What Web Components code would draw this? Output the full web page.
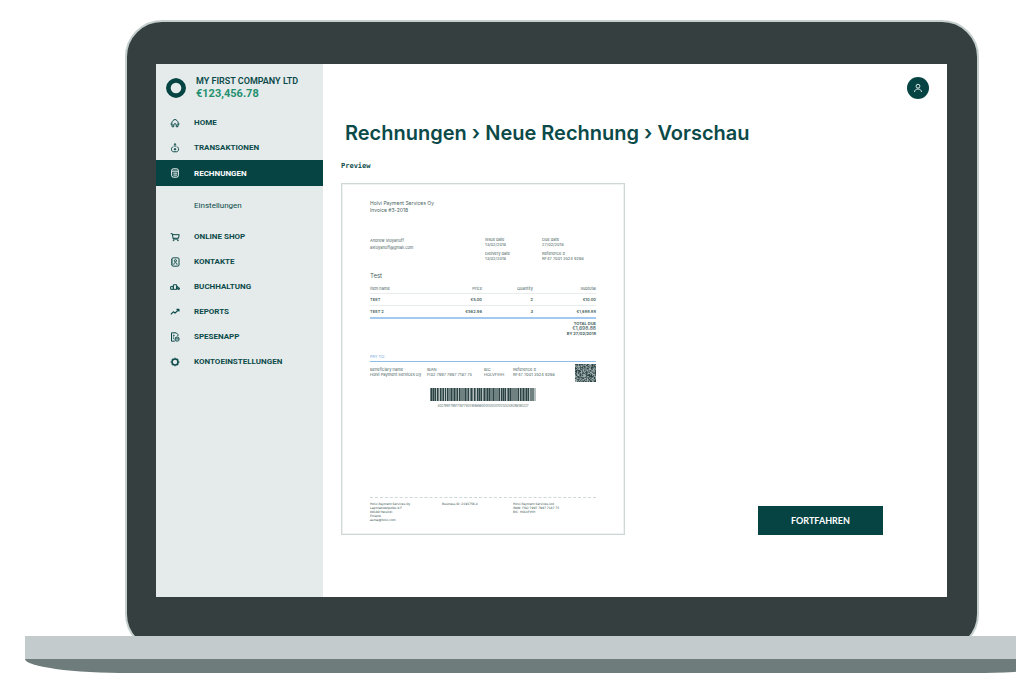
<!DOCTYPE html>
<html lang="de">
<head>
<meta charset="utf-8">
<title>Rechnungen – Vorschau</title>
<style>
  html, body { margin: 0; background: #fff; }
  body {
    overflow-x: hidden;
    font-family: Roboto, "Liberation Sans", sans-serif;
    --ink: #0b4a49;
    --brand: #064444;
    --panel: #e5ebeb;
  }
</style>
</head>
<body>
<laptop-frame>
  <app-shell>
    <side-nav slot="nav">
      <account-card name="MY FIRST COMPANY LTD" balance="€123,456.78"></account-card>
      <nav-item icon="home">HOME</nav-item>
      <nav-item icon="transfer">TRANSAKTIONEN</nav-item>
      <nav-item icon="invoice" active>RECHNUNGEN</nav-item>
      <nav-item sub>Einstellungen</nav-item>
      <nav-item icon="cart">ONLINE SHOP</nav-item>
      <nav-item icon="contact">KONTAKTE</nav-item>
      <nav-item icon="books">BUCHHALTUNG</nav-item>
      <nav-item icon="chart">REPORTS</nav-item>
      <nav-item icon="expense">SPESENAPP</nav-item>
      <nav-item icon="gear">KONTOEINSTELLUNGEN</nav-item>
    </side-nav>
    <invoice-preview></invoice-preview>
  </app-shell>
</laptop-frame>

<script>
const define = (name, html, setup) => {
  const tpl = document.createElement('template');
  tpl.innerHTML = html;
  customElements.define(name, class extends HTMLElement {
    constructor() {
      super();
      this.attachShadow({ mode: 'open' }).append(tpl.content.cloneNode(true));
    }
    connectedCallback() { if (setup) setup(this, this.shadowRoot); }
  });
};

define('laptop-frame', `
<style>
  :host { display: block; overflow: hidden; padding: 20px 0 6px; }
  .lid {
    margin: 0 37px 0 125px; padding: 42px 30px 52px 29px;
    background: #363f40; border: 2px solid #c5d0ce; border-radius: 37px;
  }
  .base { position: relative; margin: -15px -63px 0 25px; }
  .deck { height: 23px; background: #c3cbcc; }
  .foot { height: 14px; background: #6e7d7c; border-radius: 0 0 105px 105px / 0 0 14px 14px; }
</style>
<div class="lid"><slot></slot></div>
<div class="base"><div class="deck"></div><div class="foot"></div></div>`);

define('app-shell', `
<style>
  :host { display: grid; grid-template-columns: 167px 1fr; background: #fff; }
</style>
<slot name="nav"></slot><slot></slot>`);

define('side-nav', `
<style>
  :host { display: block; background: var(--panel); padding-top: 11px; }
</style>
<nav><slot></slot></nav>`);

define('account-card', `
<style>
  :host { display: flex; align-items: center; gap: 10px; padding: 0 0 9px 10px; color: var(--ink); }
  svg { width: 20px; height: 20px; display: block; }
  .name { font-size: 9px; line-height: 12px; font-weight: 600; }
  .sum { font-size: 11px; line-height: 14px; font-weight: 700; color: #24906f; }
</style>
<svg viewBox="0 0 20 20" role="img" aria-label="Logo"><path d="M10 0l3.800.9 3 2.200 2.300 3L20 10l-.9 3.900-2.300 3-3 2.200L10 20l-3.800-.9-3-2.200-2.300-3L0 10l.9-3.900 2.300-3 3-2.200z" fill="#064444"/><circle cx="10" cy="10" r="5.300" fill="#e5ebeb"/></svg>
<div><div class="name"></div><div class="sum"></div></div>`, (el, root) => {
  root.querySelector('.name').textContent = el.getAttribute('name');
  root.querySelector('.sum').textContent = el.getAttribute('balance');
});

const ICONS = {
  home: '<path d="M2.300 8.500C.8 8.300.8 6.200 2.300 5.800 2.500 3.500 4.500 2 6 1.800c1.500.2 3.500 1.700 3.700 4 1.500.4 1.500 2.500 0 2.700M2.500 6.500v4h2V8.300a1.500 1.500 0 0 1 3 0v2.200h2v-4"/>',
  transfer: '<path d="M4 4.500c-3 .5-3 5.500 0 6h4c3-.5 3-5.500 0-6M6 .8v4M4.500 2.200L6 .8l1.500 1.400"/><circle cx="6" cy="7.500" r=".9" fill="currentColor"/>',
  invoice: '<rect x="2" y="1" width="8" height="10" rx="2"/><path d="M2.500 3.800h7M4 6.200h4.500M4 8.500h4.500"/>',
  cart: '<path d="M.8 2h2l1 6.500h6M3 3.200h8l-.8 4.300H3.600"/><circle cx="4.300" cy="10" r=".5"/><circle cx="9.500" cy="10" r=".5"/>',
  contact: '<rect x="2.300" y="1" width="8.500" height="10" rx="1.500"/><circle cx="6.500" cy="4.500" r="1.300"/><path d="M4.500 9.300c0-3.300 4-3.300 4 0M1.300 3.500h1.500M1.300 6h1.500M1.300 8.500h1.500"/>',
  books: '<path d="M.8 8.800V5.500H4v3.300zM4 8.800V3.300h4v5.500zM8 8.800V5.500h1.500v3.300M9.500 8.800V7h1.700v1.800z"/>',
  chart: '<path d="M1 8.800l3-3 2 1.500L10.500 3M7.800 2.800h2.900v2.700" stroke-width="1.400"/>',
  expense: '<path d="M9.500 5V3L7.500 1H1.800v10h4M3.500 4h2M3.500 6h1.500M3.500 8h1"/><circle cx="8.500" cy="8.500" r="2.500"/><path d="M6.500 8.300h4"/>',
  gear: '<circle cx="6" cy="6" r="3.600" stroke-width="1.900"/><path d="M6 .8v1M6 10.200v1M.8 6h1M10.200 6h1M2.300 2.300l.7.700M9 9l.7.700M2.300 9.700L3 9M9 3l.7-.7" stroke-width="1.600"/>'
};

define('nav-item', `
<style>
  :host { display: block; color: var(--ink); font-size: 8px; font-weight: 700; }
  a { display: flex; align-items: center; gap: 14px; height: 25px; padding-left: 14px; color: inherit; text-decoration: none; }
  svg { width: 10px; height: 10px; flex: none; fill: none; stroke: currentColor; stroke-width: 1.2; stroke-linejoin: round; }
  :host([active]) { background: var(--brand); color: #fff; }
  :host([active]) a { height: 26px; }
  :host([sub]) { font-weight: 400; }
  :host([sub]) a { height: 38px; }
</style>
<a href="#"><svg viewBox="0 0 12 12" aria-hidden="true"></svg><span><slot></slot></span></a>`, (el, root) => {
  root.querySelector('svg').innerHTML = ICONS[el.getAttribute('icon')] || '';
  if (el.hasAttribute('active')) root.querySelector('a').setAttribute('aria-current', 'page');
});

define('invoice-preview', `
<style>
  :host { display: block; padding: 13px 18px 62px; color: var(--ink); }
  .account {
    display: flex; align-items: center; justify-content: center; width: 22px; height: 22px;
    margin-left: auto; padding: 0; border: 0; border-radius: 50%; background: var(--brand);
  }
  .account svg { width: 10px; height: 10px; fill: none; stroke: #dfe9e8; stroke-width: 1; }
  h1 { margin: 22px 0 0 4px; font: 600 20px/24px Inter, sans-serif; white-space: nowrap; }
  h2 { margin: 16px 0 12px; font: 700 7px/10px "DejaVu Sans Mono", monospace; }
  .row { display: flex; align-items: flex-end; justify-content: space-between; padding-right: 46px; }
  .go {
    width: 125px; height: 29px; padding: 0; border: 0; background: var(--brand); color: #fff;
    font: 700 9px/12px Lato, sans-serif;
  }
</style>
<button class="account" aria-label="Konto"><svg viewBox="0 0 10 10"><circle cx="5" cy="3.200" r="1.900"/><path d="M1.500 9c0-4 7-4 7 0"/></svg></button>
<h1>Rechnungen › Neue Rechnung › Vorschau</h1>
<h2>Preview</h2>
<div class="row"><invoice-sheet></invoice-sheet><button class="go">FORTFAHREN</button></div>`);

define('invoice-sheet', `
<style>
  :host {
    display: flex; flex-direction: column; box-sizing: border-box; width: 284px; min-height: 352px;
    padding: 16px 28px 12px; border: 1px solid #cdd8d7; outline: 1px solid #eef2f2; outline-offset: -2px;
    color: #486361; font: 4px/5px Inter, sans-serif;
  }
  p { margin: 0; }
  .title { font-size: 5px; line-height: 7px; }
  .meta { display: grid; grid-template-columns: 115px 57px 1fr; row-gap: 4px; margin-top: 23px; white-space: nowrap; }
  .client { grid-row: span 2; line-height: 7px; }
  .subject { margin-top: 11px; font-size: 6px; line-height: 8px; }
  table { width: 100%; margin-top: 3px; border-collapse: collapse; table-layout: fixed; }
  th, td { padding: 0; height: 10px; text-align: right; font-weight: 400; border-bottom: 1px solid #e8eeed; }
  th:first-child, td:first-child { text-align: left; }
  td { height: 11px; font-weight: 600; }
  tr:last-child td { border-bottom: 2px solid #a3c9ee; }
  .total { margin-top: 2px; text-align: right; font-weight: 700; }
  .total .sum { font-size: 5px; font-weight: 500; }
  .payto { margin-top: 18px; padding-bottom: 2px; border-bottom: 1px solid #8fbdea; color: #6ba5de; }
  .bank { display: grid; grid-template-columns: 57px 57px 29px 1fr 21px; margin-top: 2px; white-space: nowrap; }
  .bank p { padding-top: 3px; }
  .qr { width: 21px; height: 18px; display: block; background: #a9b5b4; }
  .code { align-self: center; margin: 6px 0 0; text-align: center; font-size: 3px; line-height: 4px; }
  .code svg { display: block; width: 106px; height: 13px; margin-bottom: 3px; background: #b4bfbe; }
  footer {
    display: grid; grid-template-columns: 72px 71px 1fr; margin-top: auto; padding-top: 4px;
    border-top: 1px dashed #cdd8d7; font: 3px/4px "DejaVu Sans", sans-serif; color: #2f4d4b;
  }
</style>
<p class="title">Holvi Payment Services Oy<br>Invoice #3-2018</p>
<div class="meta">
  <p class="client">Andrew Stoyanoff<br>astoyanoff@gmail.com</p>
  <p>Issue date<br>13/02/2018</p>
  <p>Due date<br>27/02/2018</p>
  <p>Delivery date<br>13/02/2018</p>
  <p>Reference #<br>RF47 7001 3524 9298</p>
</div>
<p class="subject">Test</p>
<table>
  <colgroup><col style="width:62px"><col style="width:50px"><col style="width:51px"><col></colgroup>
  <thead><tr><th>Item name</th><th>Price</th><th>Quantity</th><th>Subtotal</th></tr></thead>
  <tbody>
    <tr><td>TEST</td><td>€5.00</td><td>2</td><td>€10.00</td></tr>
    <tr><td>TEST 2</td><td>€562.96</td><td>3</td><td>€1,688.88</td></tr>
  </tbody>
</table>
<p class="total">TOTAL DUE<br><span class="sum">€1,698.88</span><br>BY 27/02/2018</p>
<p class="payto">PAY TO:</p>
<div class="bank">
  <p>Beneficiary name<br>Holvi Payment Services Oy</p>
  <p>IBAN<br>FI02 7997 7997 7187 75</p>
  <p>BIC<br>HOLVFIHH</p>
  <p>Reference #<br>RF47 7001 3524 9298</p>
  <svg class="qr" viewBox="0 0 28 24" role="img" aria-label="QR-Code"></svg>
</div>
<div class="code">
  <svg viewBox="0 0 212 13" preserveAspectRatio="none" role="img" aria-label="Barcode"></svg>
  402799779977187750016988800000000700135249298180227
</div>
<footer>
  <div>Holvi Payment Services Oy<br>Lapinlahdenpolku 8 F<br>00180 Helsinki<br>Finland<br>asma@holvi.com</div>
  <div>Business ID: 2193756-4</div>
  <div>Holvi Payment Services Ltd<br>IBAN: FI02 7997 7997 7187 75<br>BIC: HOLVFIHH</div>
</footer>`, (el, root) => {
  let seed = 11;
  const next = () => (seed = (seed * 16807) % 2147483647) / 2147483647;
  let cells = '';
  for (let y = 0; y < 24; y++)
    for (let x = 0; x < 28; x++)
      if (next() < 0.55) cells += `M${x} ${y}h1v1h-1z`;
  root.querySelector('.qr').innerHTML = `<path d="${cells}" fill="#2b4344"/>`;
  let bars = '', x = 0;
  while (x < 209) {
    const w = 1 + Math.floor(next() * 3);
    bars += `M${x} 0h${w}v13h-${w}z`;
    x += w + 1 + Math.floor(next() * 1.5);
  }
  root.querySelector('.code svg').innerHTML = `<path d="${bars}" fill="#2b4344"/>`;
});
</script>
</body>
</html>
